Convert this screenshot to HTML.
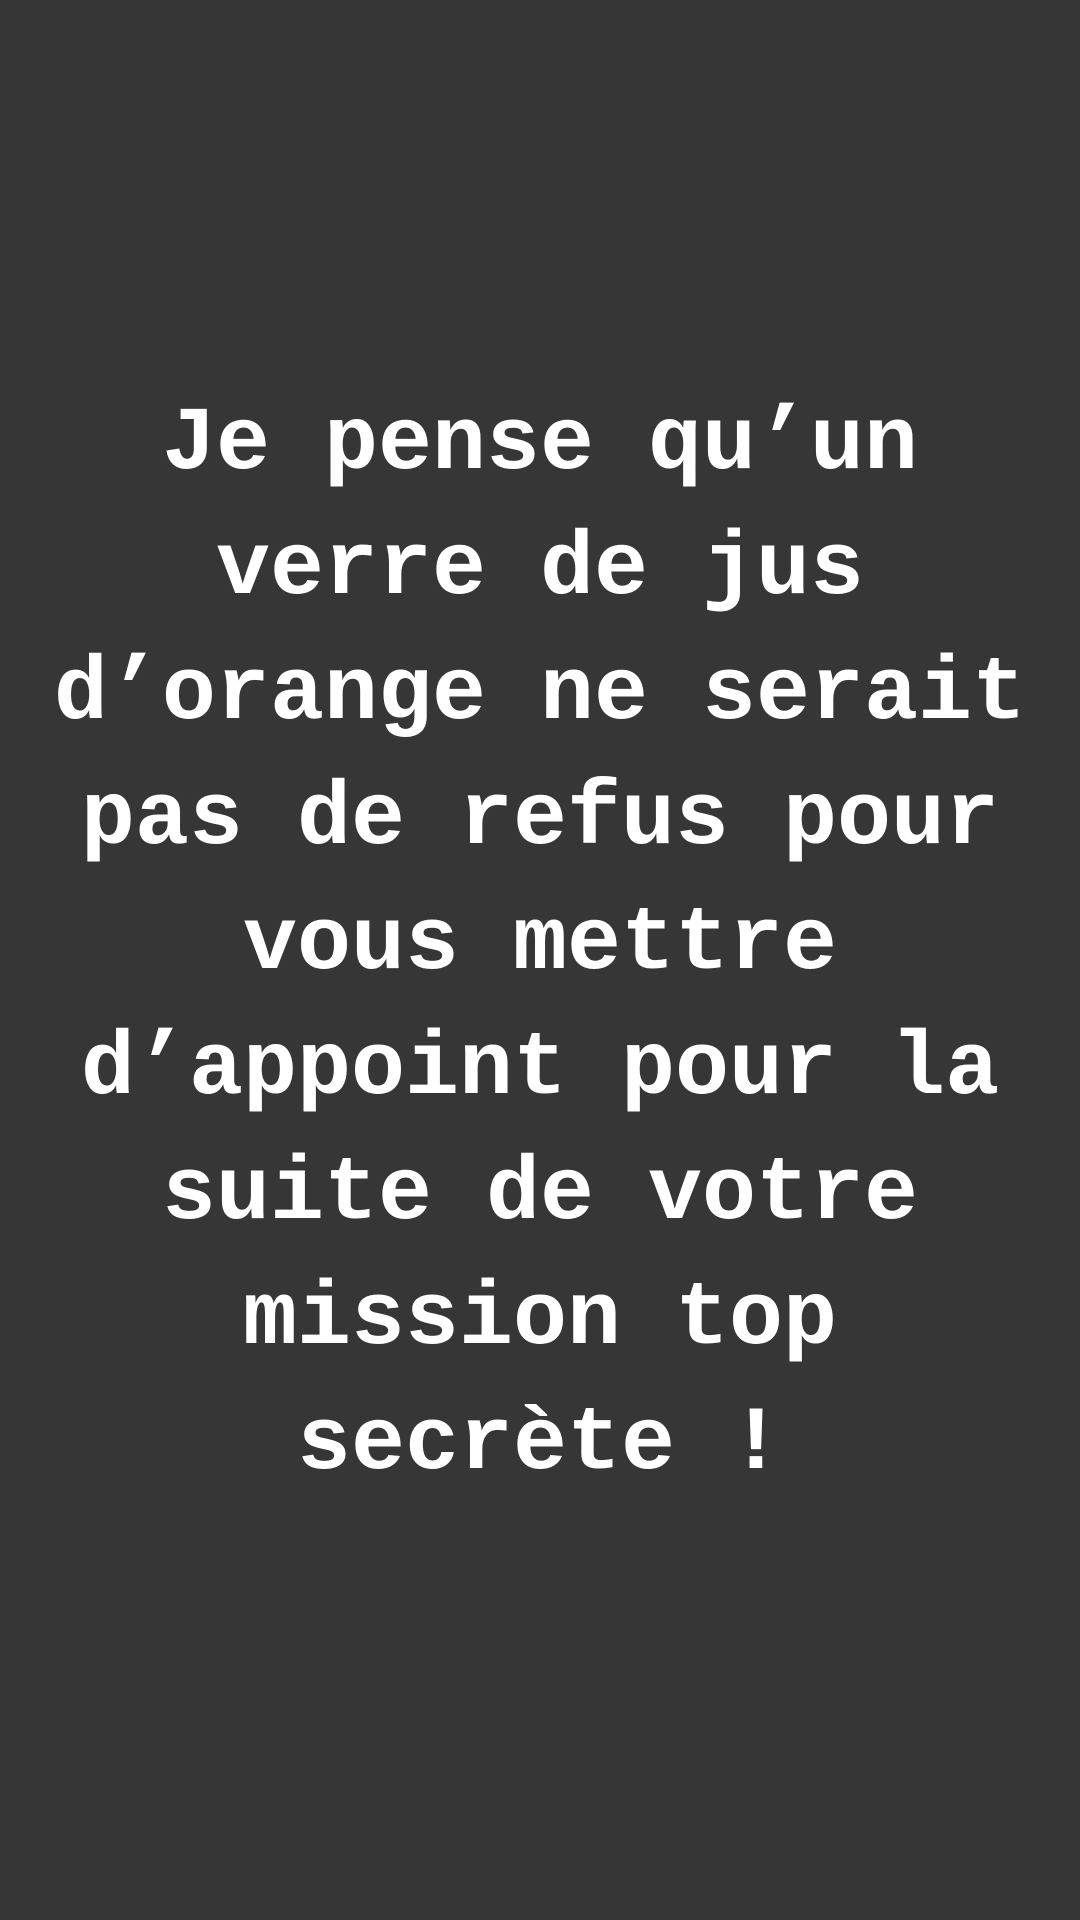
<!DOCTYPE html>
<html><head><meta charset="utf-8"><style>
html,body{margin:0;padding:0;}
body{width:1080px;height:1920px;background:#363636;overflow:hidden;position:relative;}
.t{position:absolute;left:0;top:383px;width:1080px;text-align:center;color:#fff;
font-family:"Liberation Mono",monospace;font-weight:bold;font-size:90px;line-height:125px;letter-spacing:0px;}
</style></head><body>
<div class="t">Je pense qu’un<br>verre de jus<br>d’orange ne serait<br>pas de refus pour<br>vous mettre<br>d’appoint pour la<br>suite de votre<br>mission top<br>secrète !</div>
</body></html>
